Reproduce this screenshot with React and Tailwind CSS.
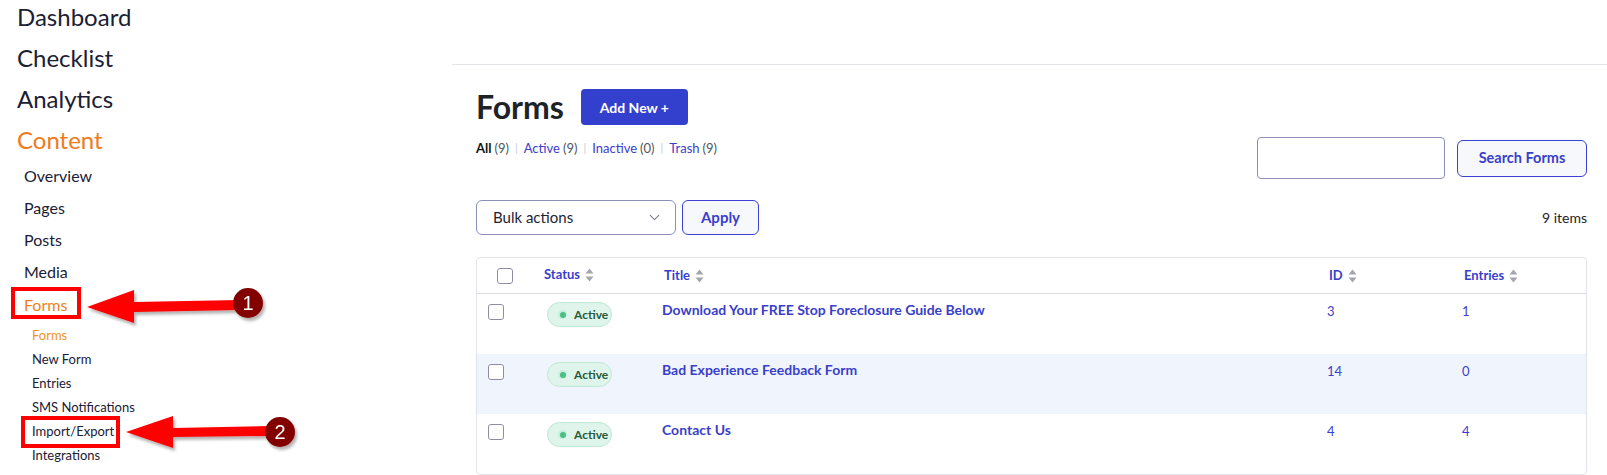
import React from "react";
import { ChevronDown } from "lucide-react";

const font = { fontFamily: "Lato, 'Noto Sans', sans-serif" };

const SortIcon = () => (
  <svg width="9" height="14" viewBox="0 0 9 14" className="ml-[5px] inline-block">
    <path d="M4.5 0.5 L8.5 5.5 H0.5 Z" fill="#a3a6ae" />
    <path d="M4.5 13.5 L8.5 8.5 H0.5 Z" fill="#a3a6ae" />
  </svg>
);

const Checkbox = ({ className = "" }) => (
  <div className={`w-[16px] h-[16px] rounded-[3px] border-[1.5px] border-[#8d8ea6] bg-white ${className}`} />
);

const ActiveBadge = () => (
  <div className="mt-[8px] ml-[3px] w-[65px] h-[25px] rounded-full bg-[#dff5eb] border border-[#bfe8d4] flex items-center pl-[10px] gap-[7px]">
    <span className="w-[9px] h-[9px] rounded-full bg-[#c7eedb] flex items-center justify-center">
      <span className="w-[6px] h-[6px] rounded-full bg-[#4cbf85]" />
    </span>
    <span className="text-[12px] font-bold text-[#245a3e]">Active</span>
  </div>
);

const rows = [
  { title: "Download Your FREE Stop Foreclosure Guide Below", id: 3, entries: 1 },
  { title: "Bad Experience Feedback Form", id: 14, entries: 0 },
  { title: "Contact Us", id: 4, entries: 4 },
];

const Sidebar = () => (
  <div className="relative w-[452px] shrink-0 pl-[17px] text-[#1b2034]">
    <div className="-mt-[4px]">
      {["Dashboard", "Checklist", "Analytics"].map((t) => (
        <div key={t} className="h-[41px] flex items-center text-[24px]">{t}</div>
      ))}
      <div className="h-[41px] flex items-center text-[24px] text-[#ee7b20]">Content</div>
    </div>
    <div className="pl-[7px]">
      {["Overview", "Pages", "Posts", "Media"].map((t) => (
        <div key={t} className="h-[32px] flex items-center text-[16px]">{t}</div>
      ))}
      <div className="h-[33px] flex items-center text-[16px] text-[#ef7f24]">
        <span className="relative">
          Forms
          <span className="absolute left-[-13px] top-[-6px] w-[70px] h-[32px] border-[4px] border-[#ff0000]" />
        </span>
      </div>
    </div>
    <div className="pl-[15px] mt-[3px] text-[13px]">
      <div className="h-[24px] flex items-center text-[#f5921f]">Forms</div>
      <div className="h-[24px] flex items-center">New Form</div>
      <div className="h-[24px] flex items-center">Entries</div>
      <div className="h-[24px] flex items-center">SMS Notifications</div>
      <div className="h-[24px] flex items-center">
        <span className="relative">
          Import/Export
          <span className="absolute left-[-11px] top-[-6px] w-[99px] h-[32px] border-[4px] border-[#ff0000]" />
        </span>
      </div>
      <div className="h-[24px] flex items-center">Integrations</div>
    </div>

    {/* annotation arrows */}
    <svg className="absolute left-0 top-0 pointer-events-none" width="320" height="475" viewBox="0 0 320 475">
      <defs>
        <filter id="sh" x="-20%" y="-40%" width="140%" height="180%">
          <feDropShadow dx="2" dy="3" stdDeviation="1.5" floodColor="#000" floodOpacity="0.3" />
        </filter>
      </defs>
      <g filter="url(#sh)">
        <path d="M87 307 L134 290 L134 302 L240 300 L240 310 L134 312 L134 323 Z" fill="#ff0000" />
        <circle cx="248" cy="303" r="15" fill="#830000" />
        <text x="248" y="310" textAnchor="middle" fontSize="20" fill="#fff" fontFamily="Liberation Sans, sans-serif">1</text>
      </g>
      <g filter="url(#sh)">
        <path d="M126 432 L173 416 L173 428 L272 426 L272 436 L173 437 L173 448 Z" fill="#ff0000" />
        <circle cx="280" cy="432" r="15" fill="#830000" />
        <text x="280" y="439" textAnchor="middle" fontSize="20" fill="#fff" fontFamily="Liberation Sans, sans-serif">2</text>
      </g>
    </svg>
  </div>
);

const Sep = () => <span className="mx-[6px] text-[#c9ccd3] text-[11px]">|</span>;

const Main = () => (
  <div className="flex-1 min-w-0 flex flex-col">
    <div className="h-[65px] border-b border-[#e3e5ec]" />
    <div className="pl-[24px] pr-[20px]">
      <div className="mt-[24px] h-[36px] flex items-center gap-[17px]">
        <h1 className="text-[32px] font-bold text-[#1d2327] leading-none">Forms</h1>
        <button className="w-[107px] h-[36px] rounded-[4px] bg-[#3340cd] text-white text-[14px] font-bold">
          Add New +
        </button>
      </div>

      <div className="mt-[12px] flex justify-between items-start">
        <div className="pt-[3px] h-[20px] flex items-center text-[13px] text-[#50575e]">
          <span className="font-bold text-[#111]">All</span>
          <span className="ml-[3px]">(9)</span>
          <Sep />
          <span className="text-[#3b40c9]">Active</span>
          <span className="ml-[3px]">(9)</span>
          <Sep />
          <span className="text-[#3b40c9]">Inactive</span>
          <span className="ml-[3px]">(0)</span>
          <Sep />
          <span className="text-[#3b40c9]">Trash</span>
          <span className="ml-[3px]">(9)</span>
        </div>
        <div className="flex items-center gap-[12px]">
          <div className="w-[188px] h-[42px] rounded-[4px] border border-[#8c8fb6] bg-white" />
          <button className="w-[130px] h-[37px] rounded-[6px] border-[1.5px] border-[#3b41d0] bg-[#f7f8fc] text-[#3a3fc9] text-[14.5px] font-bold">
            Search Forms
          </button>
        </div>
      </div>

      <div className="mt-[21px] flex items-center">
        <div className="w-[200px] h-[35px] rounded-[6px] border border-[#8c8fb6] bg-white flex items-center justify-between pl-[16px] pr-[12px] text-[15px] text-[#1d2334]">
          <span>Bulk actions</span>
          <ChevronDown size={17} strokeWidth={1.5} color="#7b7f8c" />
        </div>
        <button className="ml-[6px] w-[77px] h-[35px] rounded-[6px] border-[1.5px] border-[#3b41d0] bg-[#f7f8fc] text-[#3a3fc9] text-[15px] font-bold">
          Apply
        </button>
        <div className="ml-auto text-[14px] text-[#1d2327]">9 items</div>
      </div>

      <div className="mt-[22px] border border-[#e2e4ec] rounded-[4px] bg-white">
        <div className="h-[36px] grid grid-cols-[67px_119px_665px_135px_1fr] items-center border-b-[1.5px] border-[#dcdee6] text-[13px] font-bold text-[#3a3fc9]">
          <div className="pl-[20px]"><Checkbox /></div>
          <div className="flex items-center -mt-[2px]">Status<SortIcon /></div>
          <div className="flex items-center pl-[1px]">Title<SortIcon /></div>
          <div className="flex items-center pl-[1px]">ID<SortIcon /></div>
          <div className="flex items-center pl-[1px]">Entries<SortIcon /></div>
        </div>
        {rows.map((r, i) => (
          <div
            key={r.id}
            className={`h-[60px] grid grid-cols-[67px_119px_665px_135px_1fr] items-start ${i === 1 ? "bg-[#f0f5fd]" : ""}`}
          >
            <div className="pl-[11px] pt-[10px]"><Checkbox /></div>
            <div><ActiveBadge /></div>
            <div className="pt-[6px] leading-[20px] text-[14px] font-bold text-[#3a3fc9] -ml-[1px]">{r.title}</div>
            <div className="pt-[7px] leading-[20px] text-[13px] text-[#3a3fc9] -ml-[1px]">{r.id}</div>
            <div className="pt-[7px] leading-[20px] text-[13px] text-[#3a3fc9] -ml-[1px]">{r.entries}</div>
          </div>
        ))}
      </div>
    </div>
  </div>
);

export default function App() {
  return (
    <div className="w-[1607px] h-[475px] overflow-hidden bg-white flex" style={font}>
      <Sidebar />
      <Main />
    </div>
  );
}
